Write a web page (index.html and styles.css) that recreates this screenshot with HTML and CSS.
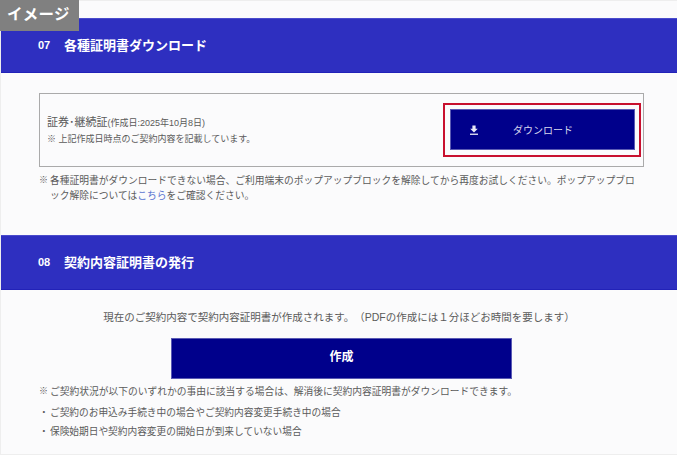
FILE: index.html
```html
<!DOCTYPE html>
<html lang="ja">
<head>
<meta charset="utf-8">
<title>各種証明書ダウンロード</title>
<link rel="stylesheet" href="styles.css">
</head>
<body>
<div class="page">
  <div class="badge">イメージ</div>
  <section class="section first">
    <h2 class="bar"><span class="num">07</span><span>各種証明書ダウンロード</span></h2>
    <div class="body body-dl">
      <div class="card">
        <div class="card-text">
          <p class="cert"><span class="cert-name">証券･継続証</span><span class="cert-date">(作成日:2025年10月8日)</span></p>
          <p class="cert-note">※ 上記作成日時点のご契約内容を記載しています。</p>
        </div>
        <div class="highlight">
          <a class="btn-dl" href="#">
            <svg class="dl-icon" viewBox="0 0 10 10" width="10" height="10" aria-hidden="true"><path d="M3.4 0.5h3.2v3.2h2.2L5 7.4 1.2 3.7h2.2z" fill="#e8e8f6"/><rect x="1" y="8.6" width="8" height="1.3" fill="#e8e8f6"/></svg>
            <span class="dl-label">ダウンロード</span>
          </a>
        </div>
      </div>
      <p class="note hang"><span class="mark">※</span><span>各種証明書がダウンロードできない場合、ご利用端末のポップアップブロックを解除してから再度お試しください。ポップアップブロック解除については<a class="link" href="#">こちら</a>をご確認ください。</span></p>
    </div>
  </section>
  <section class="section second">
    <h2 class="bar"><span class="num">08</span><span>契約内容証明書の発行</span></h2>
    <div class="body body-issue">
      <p class="lead">現在のご契約内容で契約内容証明書が作成されます。（PDFの作成には１分ほどお時間を要します）</p>
      <a class="btn-make" href="#">作成</a>
      <p class="note hang cond"><span class="mark">※</span><span>ご契約状況が以下のいずれかの事由に該当する場合は、解消後に契約内容証明書がダウンロードできます。</span></p>
      <ul class="list">
        <li>ご契約のお申込み手続き中の場合やご契約内容変更手続き中の場合</li>
        <li>保険始期日や契約内容変更の開始日が到来していない場合</li>
      </ul>
    </div>
  </section>
</div>
</body>
</html>
```
FILE: styles.css
```css
* { box-sizing: border-box; }
html, body { margin: 0; padding: 0; }
body {
  width: 677px;
  height: 455px;
  overflow: hidden;
  background: #fbfbfc;
  color: #5a5a5a;
  font-family: "Liberation Sans", "Noto Sans CJK JP", sans-serif;
  text-spacing-trim: space-all;
}
a { text-decoration: none; }
p, h2, ul { margin: 0; padding: 0; }
.page {
  position: relative;
  height: 455px;
  background: #fbfbfc;
  border-top: 1px solid #eeeeee;
  border-left: 1px solid #eeeeee;
  border-bottom: 1px solid #eeeeee;
}
.badge {
  position: absolute;
  top: -1px;
  left: -1px;
  width: 79px;
  height: 31px;
  background: #808080;
  color: #fff;
  font-size: 15.5px;
  font-weight: 700;
  line-height: 30px;
  padding-left: 7px;
  letter-spacing: 0.3px;
}
.first { padding-top: 17px; }
.bar {
  display: flex;
  align-items: center;
  height: 55px;
  padding: 0 0 2px 37px;
  background: #2e2fc0;
  border-top: 1px solid #4a4bcc;
  border-bottom: 1px solid #2222b8;
  color: #fff;
  font-size: 13px;
  font-weight: 700;
}
.num { width: 26px; font-size: 11px; }
.body-dl { padding: 20px 33px 0 38px; height: 162px; }
.card {
  display: flex;
  align-items: center;
  justify-content: space-between;
  height: 74px;
  padding: 0 2px 0 7px;
  border: 1px solid #aaaaaa;
}
.cert { line-height: 14px; }
.cert-name { font-size: 11px; }
.cert-date { font-size: 9px; }
.cert-note { font-size: 9px; line-height: 14px; margin-top: 2px; }
.highlight {
  width: 198px;
  height: 54px;
  padding: 4px 4px 5px 5px;
  border: 2px solid #c8102e;
}
.btn-dl {
  display: flex;
  align-items: center;
  height: 41px;
  padding-left: 18px;
  background: #00008b;
  border: 1px solid #5a5ab4;
  color: #d8d8ee;
  font-size: 10px;
}
.dl-icon { flex: none; }
.dl-label { margin-left: 34px; }
.note { font-size: 9.75px; line-height: 15px; }
.hang { display: flex; margin-top: 5px; padding-top: 1px; text-align: left; }
.mark { flex: none; width: 11px; font-size: 9px; }
.hang > span:last-child { flex: 1; }
.link { color: #5a74d0; }
.body-issue { text-align: center; padding-top: 20px; }
.lead { font-size: 10.5px; line-height: 15px; }
.btn-make {
  display: block;
  width: 341px;
  height: 41px;
  margin: 13px 0 0 170px;
  background: #00008b;
  border: 1px solid #5a5ab4;
  color: #fff;
  font-size: 12px;
  font-weight: 700;
  line-height: 37px;
}
.cond { margin: 4px 0 0 38px; }
.list { list-style: none; text-align: left; margin: 7px 0 0 38px; }
.list li { display: flex; font-size: 9.7px; line-height: 14px; margin-bottom: 5px; }
.list li::before { content: "・"; width: 11px; flex: none; }
```
